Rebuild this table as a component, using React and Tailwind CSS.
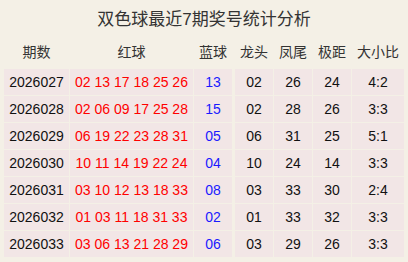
const rows = [
  ['2026027', '02 13 17 18 25 26', '13', '02', '26', '24', '4:2'],
  ['2026028', '02 06 09 17 25 28', '15', '02', '28', '26', '3:3'],
  ['2026029', '06 19 22 23 28 31', '05', '06', '31', '25', '5:1'],
  ['2026030', '10 11 14 19 22 24', '04', '10', '24', '14', '3:3'],
  ['2026031', '03 10 12 13 18 33', '08', '03', '33', '30', '2:4'],
  ['2026032', '01 03 11 18 31 33', '02', '01', '33', '32', '3:3'],
  ['2026033', '03 06 13 21 28 29', '06', '03', '29', '26', '3:3'],
];

const headers = ['期数', '红球', '蓝球', '龙头', '凤尾', '极距', '大小比'];

export default function App() {
  return (
    <div
      className="w-[408px] h-[262px] bg-[#f4f0e6] overflow-hidden"
      style={{ fontFamily: '"Liberation Sans", "Noto Sans CJK SC", sans-serif' }}
    >
      {/* Title */}
      <div className="h-[37px] pt-[8px] text-center text-[17px] leading-[24px] text-[#333]">
        双色球最近7期奖号统计分析
      </div>

      <div className="px-[4px] grid grid-cols-[65px_123px_38px_40px_38px_38px_52px] gap-px text-[14px]">
        {headers.map((h, i) => (
          <div
            key={h}
            className={`h-[31px] flex items-center justify-center text-[#333] ${i === 3 ? 'ml-[2px]' : ''}`}
          >
            {h}
          </div>
        ))}
        {rows.map((r) => (
          <Row key={r[0]} r={r} />
        ))}
      </div>
    </div>
  );
}

function Row({ r }) {
  const [issue, red, blue, head, tail, span, ratio] = r;
  const cell = 'h-[26px] bg-[#f2e6e6] flex items-center justify-center';
  return (
    <>
      <div className={`${cell} text-[#111]`}>{issue}</div>
      <div className={`${cell} text-[#ff0000]`}>{red}</div>
      <div className={`${cell} text-[#1a1aff]`}>{blue}</div>
      <div className={`${cell} ml-[2px] text-[#111]`}>{head}</div>
      <div className={`${cell} text-[#111]`}>{tail}</div>
      <div className={`${cell} text-[#111]`}>{span}</div>
      <div className={`${cell} text-[#111]`}>{ratio}</div>
    </>
  );
}
